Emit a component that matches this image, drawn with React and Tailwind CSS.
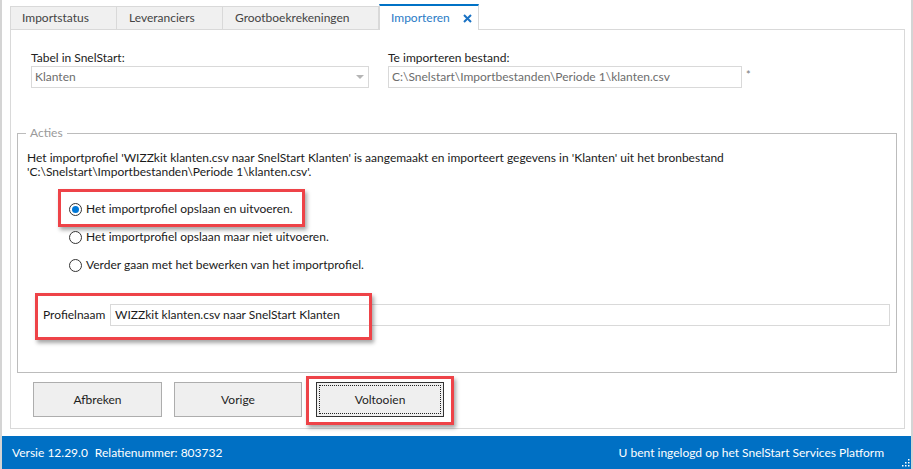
import React from "react";

function Radio({ checked }) {
  return (
    <span className="relative flex h-[13px] w-[13px] shrink-0 items-center justify-center rounded-full border border-[#333333] bg-white">
      {checked && <span className="h-[7px] w-[7px] rounded-full bg-[#0078d7]" />}
    </span>
  );
}

function RedBox({ className }) {
  return (
    <div
      className={
        "pointer-events-none absolute border-[3px] border-[#ee4348] shadow-[2px_3px_4px_rgba(0,0,0,0.35)] " +
        className
      }
    />
  );
}

export default function App() {
  return (
    <div className="relative flex h-[469px] w-[913px] flex-col overflow-hidden border-x-2 border-[#d4d4d4] bg-white font-['Segoe_UI','Lato',sans-serif] text-[12px] text-[#1a1a1a]">
      {/* main area */}
      <div className="flex flex-1 flex-col pl-[8px] pr-[6px] pt-[4px] pb-[7px]">
        {/* tabs */}
        <div className="flex h-[25px] items-end">
          <div className="flex h-[23px] w-[107px] items-center border border-b-0 border-[#d9d9d9] bg-[#f0f0f0] pl-[11px] text-[#444444]">
            Importstatus
          </div>
          <div className="flex h-[23px] w-[106px] items-center border border-b-0 border-l-0 border-[#d9d9d9] bg-[#f0f0f0] pl-[12px] text-[#444444]">
            Leveranciers
          </div>
          <div className="flex h-[23px] w-[156px] items-center border border-b-0 border-l-0 border-[#d9d9d9] bg-[#f0f0f0] pl-[12px] text-[#444444]">
            Grootboekrekeningen
          </div>
          <div className="relative -mb-px flex h-[26px] w-[100px] items-center border-x border-t-2 border-x-[#d9d9d9] border-t-[#0072c6] bg-white pl-[11px] text-[#2a7bc6]">
            <span>Importeren</span>
            <svg className="ml-[13px]" width="9" height="9" viewBox="0 0 9 9">
              <path d="M1 1 L8 8 M8 1 L1 8" stroke="#1a72c4" strokeWidth="2" />
            </svg>
          </div>
        </div>

        {/* panel */}
        <div className="flex flex-1 flex-col border border-[#d9d9d9] bg-white pt-[20px]">
          {/* fields */}
          <div className="flex pl-[20px]">
            <div className="flex w-[338px] flex-col">
              <span className="h-[16px] leading-[16px] text-[#222222]">Tabel in SnelStart:</span>
              <div className="flex h-[22px] items-center justify-between border border-[#d9d9d9] bg-white pl-[3px] pr-[4px] text-[#6d6d6d]">
                <span>Klanten</span>
                <svg width="8" height="5" viewBox="0 0 8 5">
                  <path d="M0 0 L8 0 L4 4 Z" fill="#b5b5b5" />
                </svg>
              </div>
            </div>
            <div className="ml-[19px] flex w-[354px] flex-col">
              <span className="h-[16px] leading-[16px] text-[#222222]">Te importeren bestand:</span>
              <div className="flex h-[22px] items-center border border-[#d9d9d9] bg-white pl-[3px] text-[#6d6d6d]">
                C:\Snelstart\Importbestanden\Periode 1\klanten.csv
              </div>
            </div>
            <span className="ml-[4px] mt-[19px] text-[11px] leading-[12px] text-[#777777]">*</span>
          </div>

          {/* groupbox */}
          <div className="relative ml-[6px] mr-[7px] mt-[45px] h-[240px] border border-[#bcbcbc] pl-[9px] pt-[17px]">
            <span className="absolute -top-[9px] left-[8px] bg-white px-[4px] leading-[16px] text-[#9a9a9a]">
              Acties
            </span>
            <p className="leading-[14px]">
              <span className="block">
                Het importprofiel 'WIZZkit klanten.csv naar SnelStart Klanten' is aangemaakt en importeert gegevens in 'Klanten' uit het bronbestand
              </span>
              <span className="block">'C:\Snelstart\Importbestanden\Periode 1\klanten.csv'.</span>
            </p>

            <div className="ml-[42px] mt-[22px] flex flex-col gap-[12px]">
              <div className="relative flex h-[16px] items-center gap-[4px]">
                <Radio checked />
                <span>Het importprofiel opslaan en uitvoeren.</span>
                <RedBox className="-left-[11px] -top-[12px] h-[38px] w-[247px]" />
              </div>
              <div className="flex h-[16px] items-center gap-[4px]">
                <Radio />
                <span>Het importprofiel opslaan maar niet uitvoeren.</span>
              </div>
              <div className="flex h-[16px] items-center gap-[4px]">
                <Radio />
                <span>Verder gaan met het bewerken van het importprofiel.</span>
              </div>
            </div>

            <div className="relative ml-[16px] mr-[6px] mt-[31px] flex h-[22px] items-center">
              <span className="w-[67px] shrink-0">Profielnaam</span>
              <div className="flex h-[22px] flex-1 items-center border border-[#d9d9d9] bg-white pl-[4px]">
                WIZZkit klanten.csv naar SnelStart Klanten
              </div>
              <RedBox className="-left-[8px] -top-[11px] h-[47px] w-[337px]" />
            </div>
          </div>

          {/* buttons */}
          <div className="ml-[22px] mt-[9px] flex gap-[12px]">
            <button className="h-[35px] w-[129px] border border-[#adadad] bg-[#efefef] text-[#1e1e1e]">
              Afbreken
            </button>
            <button className="h-[35px] w-[128px] border border-[#adadad] bg-[#efefef] text-[#1e1e1e]">
              Vorige
            </button>
            <div className="relative ml-[2px]">
              <button className="relative h-[35px] w-[128px] border border-[#333333] bg-[#efefef] text-[#1e1e1e]">
                <span className="absolute inset-[2px] border border-dotted border-[#222222]" />
                <span className="relative">Voltooien</span>
              </button>
              <RedBox className="-left-[10px] -top-[6px] h-[49px] w-[148px]" />
            </div>
          </div>
        </div>
      </div>

      {/* status bar */}
      <div className="relative flex h-[33px] items-center justify-between bg-[#0070c4] pl-[10px] pr-[27px] text-white">
        <div className="flex gap-[7px]">
          <span>Versie 12.29.0</span>
          <span>Relatienummer: 803732</span>
        </div>
        <span>U bent ingelogd op het SnelStart Services Platform</span>
        <svg className="absolute bottom-[2px] right-[1px]" width="8" height="8" viewBox="0 0 8 8">
          <rect x="6" y="0" width="1.5" height="1.5" fill="#ffffff" />
          <rect x="3" y="3" width="1.5" height="1.5" fill="#ffffff" />
          <rect x="6" y="3" width="1.5" height="1.5" fill="#ffffff" />
          <rect x="0" y="6" width="1.5" height="1.5" fill="#ffffff" />
          <rect x="3" y="6" width="1.5" height="1.5" fill="#ffffff" />
          <rect x="6" y="6" width="1.5" height="1.5" fill="#ffffff" />
        </svg>
      </div>
    </div>
  );
}
